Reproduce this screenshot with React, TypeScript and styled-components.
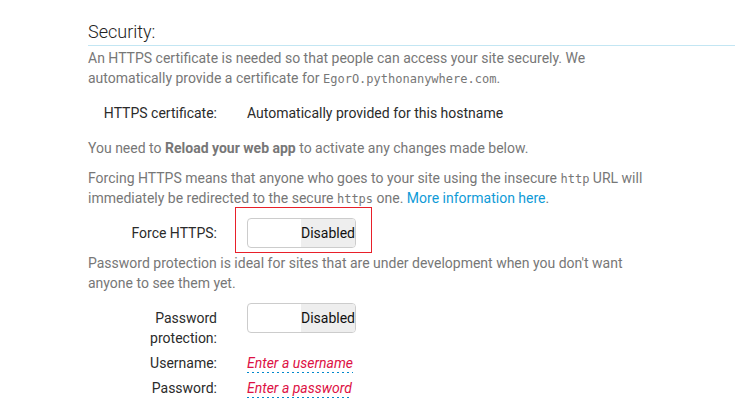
import React, { useState } from "react";
import styled, { createGlobalStyle } from "styled-components";

const GlobalStyle = createGlobalStyle`
  * { box-sizing: border-box; }
  body {
    margin: 0;
    background: #fff;
    color: #2b2b2b;
    font: 14px/20px Roboto, "Liberation Sans", sans-serif;
  }
`;

const Section = styled.main`
  padding: 20px 0 20px 88px;
`;

const Title = styled.h1`
  margin: 0 0 2px;
  padding-bottom: 1px;
  border-bottom: 1px solid #c3e6f3;
  color: #222;
  font-size: 18px;
  font-weight: 300;
  line-height: 24px;
`;

const Help = styled.p`
  max-width: 570px;
  margin: 0 0 10px;
  color: #777;
`;

const Code = styled.code`
  font-family: "DejaVu Sans Mono", monospace;
  font-size: 12px;
  line-height: 16px;
`;

const Link = styled.a`
  color: #0f9bd7;
  text-decoration: none;
`;

const Row = styled.div<{ $gap?: number }>`
  display: grid;
  grid-template-columns: 129px 1fr;
  column-gap: 30px;
  align-items: start;
  margin-bottom: ${({ $gap = 0 }) => $gap}px;
`;

const Label = styled.label`
  justify-self: end;
  max-width: 115px;
  padding-top: 5px;
  text-align: right;
`;

const NarrowLabel = styled(Label)`
  max-width: 80px;
`;

const Value = styled.div`
  padding-top: 5px;
`;

const ToggleArea = styled.div`
  position: relative;
  justify-self: start;
  height: 30px;
`;

const Highlight = styled.span`
  position: absolute;
  inset: -11px -16px -5px -12px;
  border: 1px solid #e8202a;
  pointer-events: none;
`;

const Toggle = styled.button<{ $on: boolean }>`
  display: grid;
  grid-template-columns: 53px 54px;
  width: 109px;
  height: 30px;
  padding: 0;
  overflow: hidden;
  border: 1px solid #ccc;
  border-radius: 4px;
  background: #fff;
  color: #111;
  font: inherit;
  line-height: 28px;
  cursor: pointer;

  span {
    grid-column: ${({ $on }) => ($on ? 1 : 2)};
    background: ${({ $on }) => ($on ? "#d5eef8" : "#eee")};
    text-align: left;
  }
`;

const Editable = styled.a`
  display: inline-block;
  height: 20px;
  background: repeating-linear-gradient(
      to right,
      #08c 0 2px,
      transparent 2px 5px
    )
    left bottom / 100% 1px no-repeat;
  color: #dd1144;
  font-style: italic;
  text-decoration: none;
`;

function Switch({ id }: { id: string }) {
  const [on, setOn] = useState(false);
  return (
    <Toggle
      id={id}
      type="button"
      role="switch"
      aria-checked={on}
      $on={on}
      onClick={() => setOn(!on)}
    >
      <span>{on ? "Enabled" : "Disabled"}</span>
    </Toggle>
  );
}

export default function App() {
  return (
    <>
      <GlobalStyle />
      <Section>
        <Title>Security:</Title>
        <Help>
          An HTTPS certificate is needed so that people can access your site
          securely. We automatically provide a certificate for{" "}
          <Code>EgorO.pythonanywhere.com</Code>.
        </Help>
        <Row $gap={15}>
          <Label as="span">HTTPS certificate:</Label>
          <Value>Automatically provided for this hostname</Value>
        </Row>
        <Help>
          You need to <b>Reload your web app</b> to activate any changes made
          below.
        </Help>
        <Help>
          Forcing HTTPS means that anyone who goes to your site using the
          insecure <Code>http</Code> URL will immediately be redirected to the
          secure <Code>https</Code> one.{" "}
          <Link href="#https">More information here</Link>.
        </Help>
        <Row $gap={5}>
          <Label htmlFor="force-https">Force HTTPS:</Label>
          <ToggleArea>
            <Switch id="force-https" />
            <Highlight />
          </ToggleArea>
        </Row>
        <Help>
          Password protection is ideal for sites that are under development when
          you don't want anyone to see them yet.
        </Help>
        <Row>
          <NarrowLabel htmlFor="password-protection">
            Password protection:
          </NarrowLabel>
          <ToggleArea>
            <Switch id="password-protection" />
          </ToggleArea>
        </Row>
        <Row>
          <Label as="span" id="username-label">Username:</Label>
          <Value>
            <Editable href="#username" aria-describedby="username-label">
              Enter a username
            </Editable>
          </Value>
        </Row>
        <Row>
          <Label as="span" id="password-label">Password:</Label>
          <Value>
            <Editable href="#password" aria-describedby="password-label">
              Enter a password
            </Editable>
          </Value>
        </Row>
      </Section>
    </>
  );
}
